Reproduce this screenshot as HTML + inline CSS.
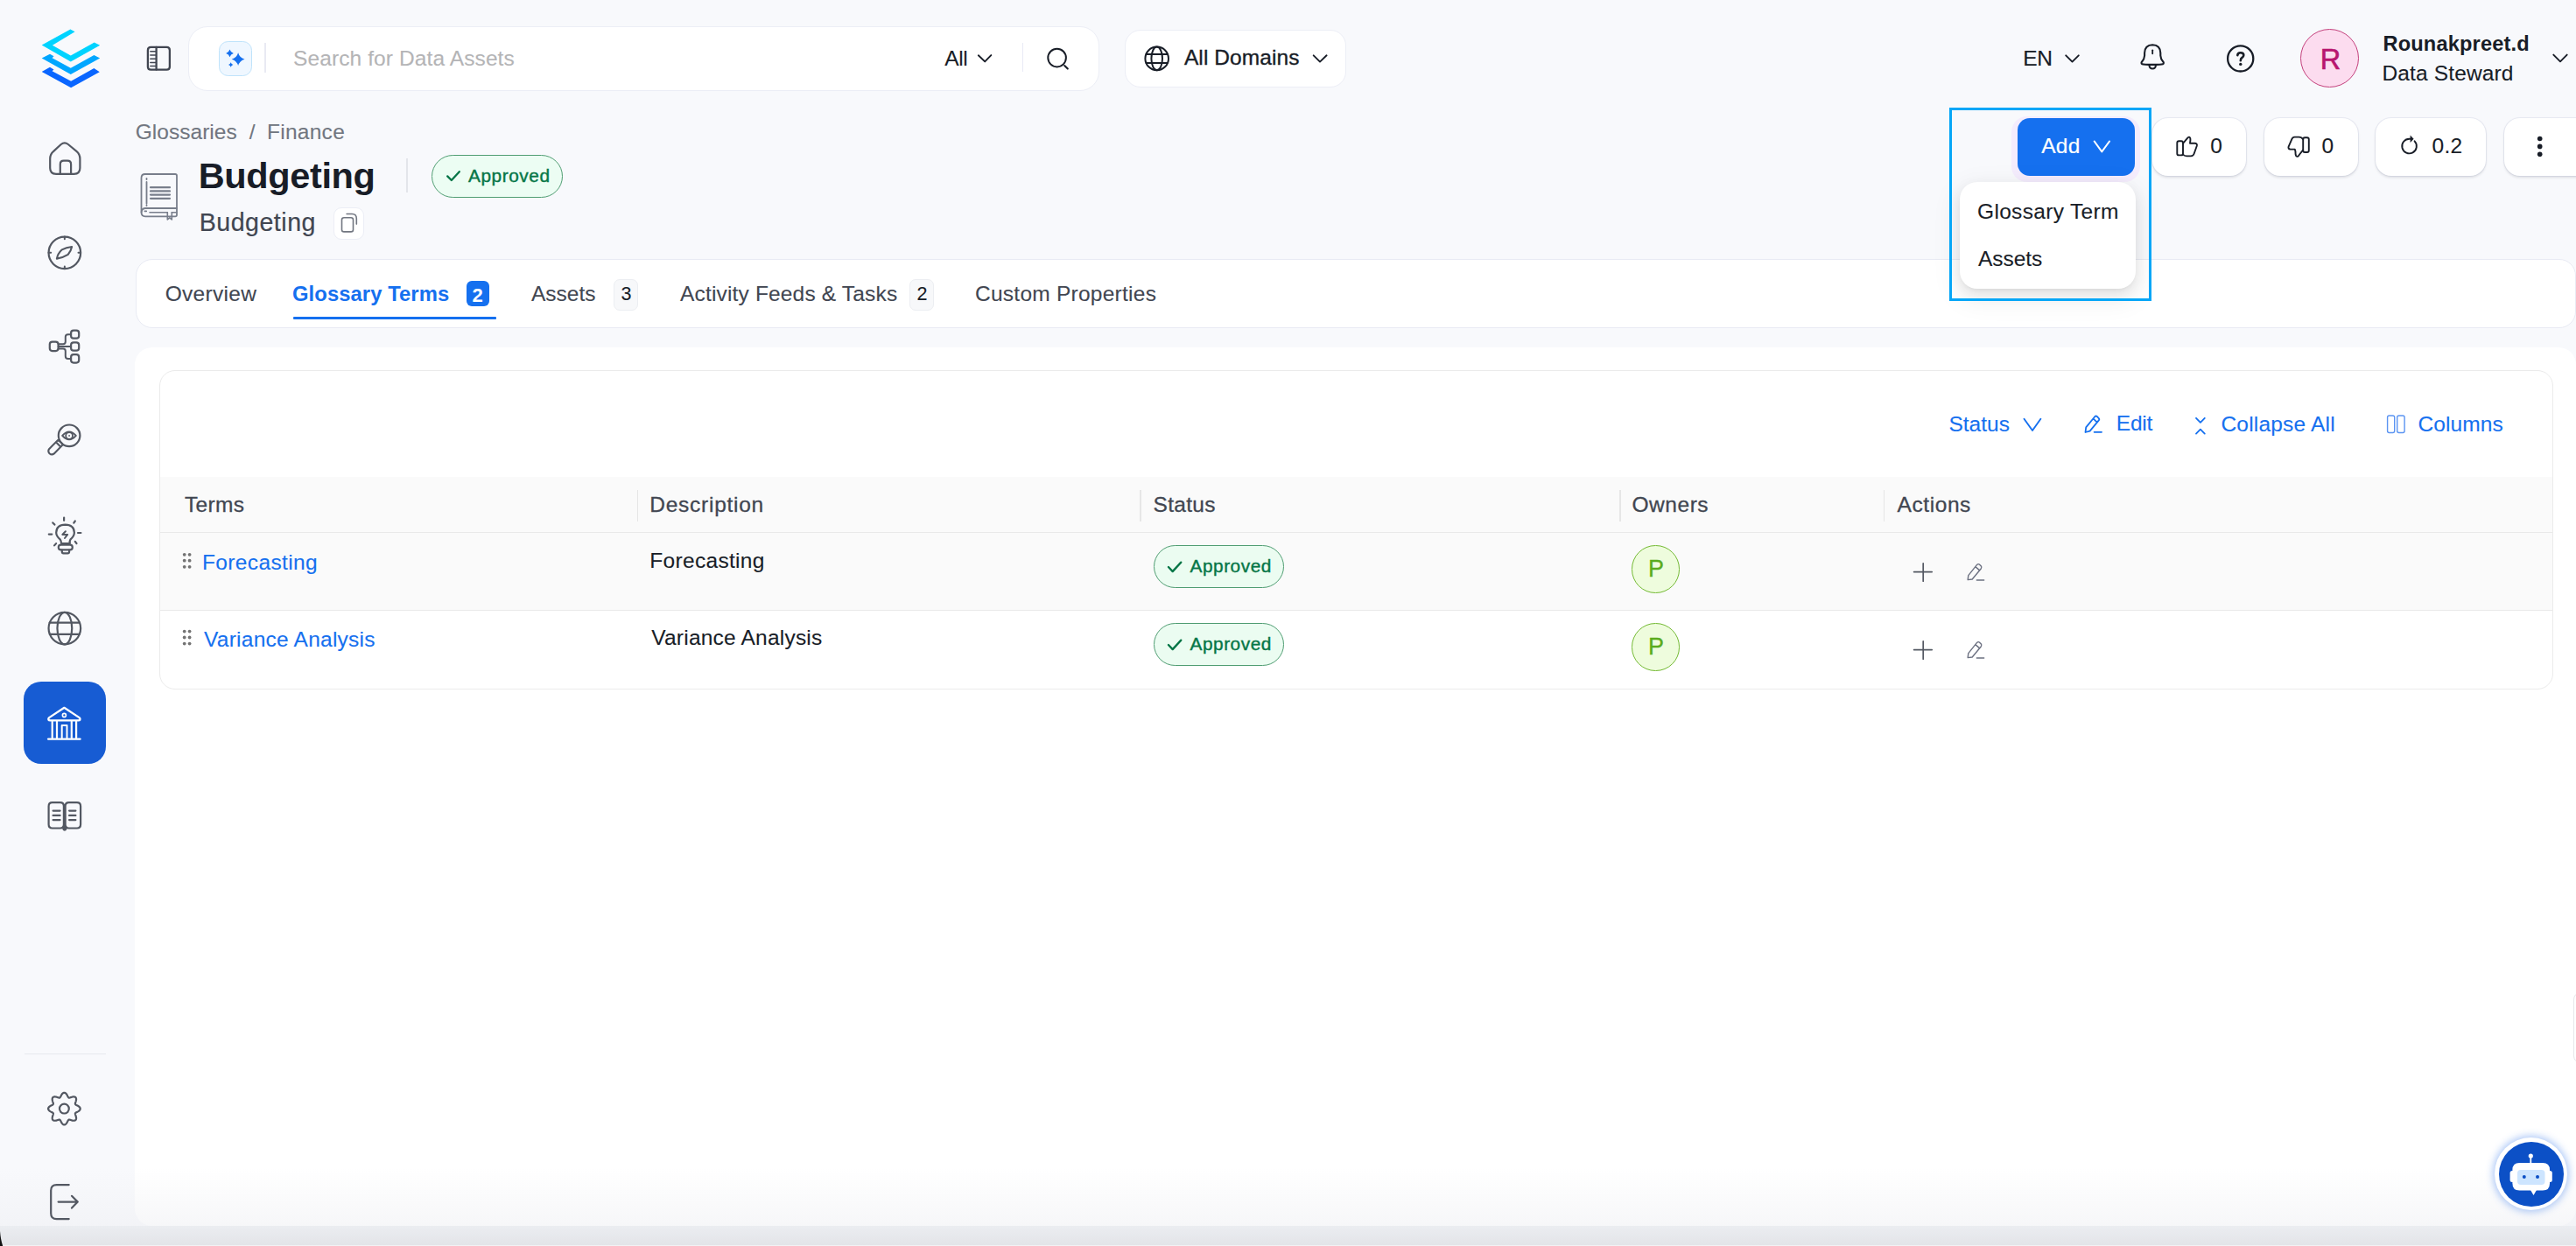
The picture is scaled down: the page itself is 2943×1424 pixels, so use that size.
<!DOCTYPE html>
<html><head><meta charset="utf-8"><title>Budgeting - Glossary</title>
<style>
*{box-sizing:border-box}
html,body{margin:0;padding:0}
body{width:2943px;height:1424px;overflow:hidden;position:relative;background:#f8f9fc;font-family:"Liberation Sans",sans-serif;color:#181d27}
.a{position:absolute}
.t{position:absolute;white-space:nowrap;line-height:1}
</style></head><body>
<div class="a" style="left:215px;top:30px;width:1041px;height:73.5px;border-radius:22px;background:#fff;border:1.5px solid #eceef6"></div>
<div class="a" style="left:250px;top:47px;width:38px;height:39.6px;border-radius:10.5px;background:#eff7ff;border:1.5px solid #bfe3fb"></div>
<div class="a" style="left:302px;top:49px;width:1.5px;height:34px;background:#e9eaf3"></div>
<div class="t" style="left:335.00px;top:54.6px;font-size:24.5px;color:#b4b4b6;letter-spacing:0.105px;-webkit-text-stroke:0.1px #b4b4b6;">Search for Data Assets</div>
<div class="t" style="left:1079.30px;top:55.1px;font-size:24.5px;color:#181d27;letter-spacing:-0.4px;-webkit-text-stroke:0.1px #181d27;">All</div>
<div class="a" style="left:1167.5px;top:49.3px;width:1.5px;height:33px;background:#e8eaf5"></div>
<div class="a" style="left:1285px;top:34px;width:253px;height:66px;border-radius:18px;background:#fff;border:1.5px solid #eceef6"></div>
<div class="t" style="left:1352.90px;top:54.2px;font-size:24.5px;color:#181d27;letter-spacing:0.1px;-webkit-text-stroke:0.35px #181d27;">All Domains</div>
<div class="t" style="left:2311.20px;top:54.8px;font-size:24.5px;color:#181d27;letter-spacing:-0.4px;-webkit-text-stroke:0.2px #181d27;">EN</div>
<div class="a" style="left:2628px;top:33px;width:67px;height:67px;border-radius:50%;background:#fcdcef;border:1.5px solid #c4407c"></div>
<div class="t" style="left:2650.70px;top:52.2px;font-size:32.5px;color:#b8166f;letter-spacing:0.0px;-webkit-text-stroke:0.6px #b8166f;">R</div>
<div class="t" style="left:2722.50px;top:38.5px;font-size:23.6px;color:#181d27;letter-spacing:0.158px;font-weight:700;">Rounakpreet.d</div>
<div class="t" style="left:2721.50px;top:71.5px;font-size:24.5px;color:#181d27;letter-spacing:0.136px;-webkit-text-stroke:0.1px #181d27;">Data Steward</div>
<div class="t" style="left:154.70px;top:138.7px;font-size:24.5px;color:#717680;letter-spacing:0.033px;-webkit-text-stroke:0.1px #717680;">Glossaries</div>
<div class="t" style="left:284.70px;top:138.7px;font-size:24.5px;color:#717680;letter-spacing:0.0px;-webkit-text-stroke:0.1px #717680;">/</div>
<div class="t" style="left:305.00px;top:138.7px;font-size:24.5px;color:#717680;letter-spacing:0.267px;-webkit-text-stroke:0.1px #717680;">Finance</div>
<div class="t" style="left:226.70px;top:179.7px;font-size:41.5px;color:#181d27;letter-spacing:-0.362px;font-weight:700;">Budgeting</div>
<div class="a" style="left:464.3px;top:181px;width:1.5px;height:39px;background:#e3e5ea"></div>
<div class="a" style="left:493px;top:177px;width:150px;height:48.6px;border-radius:25px;background:#ecfdf3;border:1.5px solid #4f9d72"></div>
<div class="t" style="left:535.00px;top:191.4px;font-size:20.8px;color:#067647;letter-spacing:0.571px;-webkit-text-stroke:0.4px #067647;">Approved</div>
<div class="t" style="left:227.70px;top:240.2px;font-size:28.6px;color:#414651;letter-spacing:0.5px;-webkit-text-stroke:0.2px #414651;">Budgeting</div>
<div class="a" style="left:380.6px;top:237.2px;width:35.4px;height:36.4px;border-radius:9px;background:#fff;border:1.2px solid #eceef6"></div>
<div class="a" style="left:2298px;top:133px;width:147px;height:75px;border-radius:18px;background:#f4ecfd"></div>
<div class="a" style="left:2305px;top:134.5px;width:134px;height:66.5px;border-radius:14px;background:#1570ef"></div>
<div class="t" style="left:2332.20px;top:154.7px;font-size:24.5px;color:#fff;letter-spacing:0.25px;-webkit-text-stroke:0.2px #fff;">Add</div>
<div class="a" style="left:2459px;top:135px;width:107px;height:66px;border-radius:18px;background:#fff;box-shadow:0 1.5px 3px rgba(16,24,40,.12),0 0 0 1px rgba(233,235,244,.9)"></div>
<div class="a" style="left:2587px;top:135px;width:107px;height:66px;border-radius:18px;background:#fff;box-shadow:0 1.5px 3px rgba(16,24,40,.12),0 0 0 1px rgba(233,235,244,.9)"></div>
<div class="a" style="left:2714px;top:135px;width:126px;height:66px;border-radius:18px;background:#fff;box-shadow:0 1.5px 3px rgba(16,24,40,.12),0 0 0 1px rgba(233,235,244,.9)"></div>
<div class="a" style="left:2861px;top:135px;width:110px;height:66px;border-radius:18px;background:#fff;box-shadow:0 1.5px 3px rgba(16,24,40,.12),0 0 0 1px rgba(233,235,244,.9)"></div>
<div class="t" style="left:2525.20px;top:154.5px;font-size:24.5px;color:#181d27;letter-spacing:0.0px;-webkit-text-stroke:0.1px #181d27;">0</div>
<div class="t" style="left:2652.50px;top:154.5px;font-size:24.5px;color:#181d27;letter-spacing:0.0px;-webkit-text-stroke:0.1px #181d27;">0</div>
<div class="t" style="left:2778.60px;top:154.8px;font-size:24.5px;color:#181d27;letter-spacing:0.25px;-webkit-text-stroke:0.1px #181d27;">0.2</div>
<div class="a" style="left:155px;top:296px;width:2788px;height:79px;border-radius:19px;background:#fff;border:1.5px solid #e9ebf4"></div>
<div class="t" style="left:188.70px;top:323.7px;font-size:24.5px;color:#414651;letter-spacing:0.3px;-webkit-text-stroke:0.1px #414651;">Overview</div>
<div class="t" style="left:334.00px;top:324.3px;font-size:23.8px;color:#1570ef;letter-spacing:0.077px;font-weight:700;">Glossary Terms</div>
<div class="a" style="left:533px;top:321px;width:26px;height:28.6px;border-radius:6px;background:#1570ef"></div>
<div class="t" style="left:539.50px;top:326.5px;font-size:22px;color:#fff;letter-spacing:0.0px;font-weight:700;">2</div>
<div class="a" style="left:334.5px;top:362px;width:232px;height:3.4px;background:#1570ef;border-radius:1px"></div>
<div class="t" style="left:607.00px;top:323.7px;font-size:24.5px;color:#414651;letter-spacing:0.0px;-webkit-text-stroke:0.1px #414651;">Assets</div>
<div class="a" style="left:701px;top:319px;width:28px;height:35.5px;border-radius:7px;background:#f7f8fa;border:1.2px solid #eceef2"></div>
<div class="t" style="left:709.40px;top:326.1px;font-size:21.5px;color:#181d27;letter-spacing:0.0px;-webkit-text-stroke:0.1px #181d27;">3</div>
<div class="t" style="left:777.00px;top:323.7px;font-size:24.5px;color:#414651;letter-spacing:0.167px;-webkit-text-stroke:0.1px #414651;">Activity Feeds &amp; Tasks</div>
<div class="a" style="left:1039px;top:319px;width:28px;height:35.5px;border-radius:7px;background:#f7f8fa;border:1.2px solid #eceef2"></div>
<div class="t" style="left:1047.60px;top:326.1px;font-size:21.5px;color:#181d27;letter-spacing:0.0px;-webkit-text-stroke:0.1px #181d27;">2</div>
<div class="t" style="left:1114.00px;top:323.7px;font-size:24.5px;color:#414651;letter-spacing:0.25px;-webkit-text-stroke:0.1px #414651;">Custom Properties</div>
<div class="a" style="left:154px;top:396.7px;width:2789px;height:1004px;border-radius:20px;background:#fff"></div>
<div class="a" style="left:182px;top:423px;width:2734.5px;height:364.5px;border-radius:18px;background:#fff;border:1.5px solid #ebebeb;overflow:hidden"><div class="a" style="left:0;top:120.5px;width:100%;height:64.5px;background:#fafafa;border-bottom:1.3px solid #e9e9e9"></div><div class="a" style="left:0;top:185px;width:100%;height:89px;background:#fafafa;border-bottom:1.3px solid #e9e9e9"></div></div>
<div class="t" style="left:2226.40px;top:473.1px;font-size:24.5px;color:#1570ef;letter-spacing:0.02px;-webkit-text-stroke:0.1px #1570ef;">Status</div>
<div class="t" style="left:2417.80px;top:472.3px;font-size:24.5px;color:#1570ef;letter-spacing:-0.233px;-webkit-text-stroke:0.1px #1570ef;">Edit</div>
<div class="t" style="left:2537.40px;top:473.1px;font-size:24.5px;color:#1570ef;letter-spacing:0.209px;-webkit-text-stroke:0.1px #1570ef;">Collapse All</div>
<div class="t" style="left:2762.50px;top:473.1px;font-size:24.5px;color:#1570ef;letter-spacing:0.083px;-webkit-text-stroke:0.1px #1570ef;">Columns</div>
<div class="t" style="left:211.00px;top:565.2px;font-size:24.5px;color:#414651;letter-spacing:0.35px;-webkit-text-stroke:0.3px #414651;">Terms</div>
<div class="t" style="left:742.30px;top:565.2px;font-size:24.5px;color:#414651;letter-spacing:0.74px;-webkit-text-stroke:0.3px #414651;">Description</div>
<div class="t" style="left:1317.60px;top:565.2px;font-size:24.5px;color:#414651;letter-spacing:0.3px;-webkit-text-stroke:0.3px #414651;">Status</div>
<div class="t" style="left:1864.50px;top:565.2px;font-size:24.5px;color:#414651;letter-spacing:0.54px;-webkit-text-stroke:0.3px #414651;">Owners</div>
<div class="t" style="left:2167.50px;top:565.2px;font-size:24.5px;color:#414651;letter-spacing:0.583px;-webkit-text-stroke:0.3px #414651;">Actions</div>
<div class="a" style="left:727.5px;top:559.5px;width:1.5px;height:36px;background:#e6e6e6"></div>
<div class="a" style="left:1302px;top:559.5px;width:1.5px;height:36px;background:#e6e6e6"></div>
<div class="a" style="left:1850px;top:559.5px;width:1.5px;height:36px;background:#e6e6e6"></div>
<div class="a" style="left:2151.5px;top:559.5px;width:1.5px;height:36px;background:#e6e6e6"></div>
<div class="t" style="left:231.00px;top:630.7px;font-size:24.5px;color:#1570ef;letter-spacing:0.36px;-webkit-text-stroke:0.1px #1570ef;">Forecasting</div>
<div class="t" style="left:742.30px;top:628.9px;font-size:24.5px;color:#181d27;letter-spacing:0.31px;-webkit-text-stroke:0.1px #181d27;">Forecasting</div>
<div class="a" style="left:1317.6px;top:623.4px;width:149px;height:48.8px;border-radius:25px;background:#ebfcf1;border:1.5px solid #4f9d72"></div>
<div class="t" style="left:1359.50px;top:637.0px;font-size:20.8px;color:#067647;letter-spacing:0.543px;-webkit-text-stroke:0.4px #067647;">Approved</div>
<div class="a" style="left:1864.3px;top:623.4px;width:54.5px;height:54.5px;border-radius:50%;background:#eefcdd;border:1.5px solid #74ba34"></div>
<div class="t" style="left:1883.00px;top:636.7px;font-size:27px;color:#5aab1e;letter-spacing:0.0px;-webkit-text-stroke:0.3px #5aab1e;">P</div>
<div class="t" style="left:233.00px;top:718.5px;font-size:24.5px;color:#1570ef;letter-spacing:0.25px;-webkit-text-stroke:0.1px #1570ef;">Variance Analysis</div>
<div class="t" style="left:744.30px;top:716.7px;font-size:24.5px;color:#181d27;letter-spacing:0.213px;-webkit-text-stroke:0.1px #181d27;">Variance Analysis</div>
<div class="a" style="left:1317.6px;top:712.4px;width:149px;height:48.8px;border-radius:25px;background:#ebfcf1;border:1.5px solid #4f9d72"></div>
<div class="t" style="left:1359.50px;top:726.0px;font-size:20.8px;color:#067647;letter-spacing:0.543px;-webkit-text-stroke:0.4px #067647;">Approved</div>
<div class="a" style="left:1864.3px;top:712.4px;width:54.5px;height:54.5px;border-radius:50%;background:#eefcdd;border:1.5px solid #74ba34"></div>
<div class="t" style="left:1883.00px;top:725.7px;font-size:27px;color:#5aab1e;letter-spacing:0.0px;-webkit-text-stroke:0.3px #5aab1e;">P</div>
<div class="a" style="left:2239px;top:208px;width:201px;height:122px;border-radius:20px;background:#fff;box-shadow:0 6px 16px 0 rgba(0,0,0,.08),0 3px 6px -4px rgba(0,0,0,.12),0 9px 28px 8px rgba(0,0,0,.05)"></div>
<div class="t" style="left:2259.00px;top:230.1px;font-size:24.5px;color:#181d27;letter-spacing:0.333px;-webkit-text-stroke:0.1px #181d27;">Glossary Term</div>
<div class="t" style="left:2260.00px;top:283.9px;font-size:24.5px;color:#181d27;letter-spacing:-0.06px;-webkit-text-stroke:0.1px #181d27;">Assets</div>
<div class="a" style="left:2227px;top:123px;width:231px;height:221px;border:3.5px solid #05a6f7"></div>
<div class="a" style="left:27px;top:778.8px;width:94px;height:94.5px;border-radius:20px;background:#175cd3"></div>
<div class="a" style="left:27.5px;top:1203.6px;width:93px;height:1.4px;background:#e7e9ee"></div>
<div class="a" style="left:0;top:1335px;width:2943px;height:66px;background:linear-gradient(rgba(236,237,241,0),rgba(236,237,241,.45))"></div>
<div class="a" style="left:0;top:1400.7px;width:2943px;height:22px;background:linear-gradient(#ebedf1,#e3e4e8)"></div>
<div class="a" style="left:0;top:1422.6px;width:2943px;height:1.4px;background:#f2f3f5"></div>
<div class="a" style="left:2940px;top:1133.5px;width:20px;height:81px;border-radius:8px;background:#fff;border:1.5px solid #e6e7ea"></div>
<div class="a" style="left:2850px;top:1300px;width:83px;height:83px;border-radius:50%;background:#fff;box-shadow:0 0 9px 2px rgba(40,110,235,.38)"></div>
<div class="a" style="left:2854.5px;top:1304.5px;width:74px;height:74px;border-radius:50%;background:#0c50c6"></div>
<svg class="a" style="left:0;top:0;overflow:visible" width="2943" height="1424" viewBox="0 0 2943 1424">
<path d="M80.4 33.5 L85.6 36.3 L59.9 51.8 L80.8 63.6 L107.7 48.4 L114.2 51.8 L80.8 70.4 L47.7 51.4 Z" fill="#00d3ff"/>
<path d="M47.7 66.5 L57.0 61.7 L61.5 64.3 L59.6 66.3 L80.8 77.8 L107.4 63.0 L114.2 66.5 L80.8 85.1 Z" fill="#00a6ff"/>
<path d="M47.7 81.9 L57.0 76.8 L61.5 79.4 L59.6 81.3 L81.1 92.8 L107.4 78.1 L113.8 82.3 L81.1 100.2 Z" fill="#0a66ff"/>
<path d="M172.4 53.9 H190.4 Q193.9 53.9 193.9 57.4 V76.2 Q193.9 79.7 190.4 79.7 H172.4 Q168.9 79.7 168.9 76.2 V57.4 Q168.9 53.9 172.4 53.9 Z" fill="none" stroke="#414651" stroke-width="2.3" stroke-linecap="round" stroke-linejoin="round" />
<path d="M178.6 54 V79.6" fill="none" stroke="#414651" stroke-width="2.3" stroke-linecap="round" stroke-linejoin="round" />
<path d="M171.8 58.75 H177.6" fill="none" stroke="#414651" stroke-width="1.5" stroke-linecap="round" stroke-linejoin="round" />
<path d="M171.8 63.1 H177.6" fill="none" stroke="#414651" stroke-width="1.5" stroke-linecap="round" stroke-linejoin="round" />
<path d="M171.8 67.2 H177.6" fill="none" stroke="#414651" stroke-width="1.5" stroke-linecap="round" stroke-linejoin="round" />
<path d="M171.8 71.4 H177.6" fill="none" stroke="#414651" stroke-width="1.5" stroke-linecap="round" stroke-linejoin="round" />
<path d="M171.8 75.6 H177.6" fill="none" stroke="#414651" stroke-width="1.5" stroke-linecap="round" stroke-linejoin="round" />
<path d="M272.1 60.300000000000004 Q273.728 66.072 279.5 67.7 Q273.728 69.328 272.1 75.10000000000001 Q270.47200000000004 69.328 264.70000000000005 67.7 Q270.47200000000004 66.072 272.1 60.300000000000004 Z" fill="#1570ef"/>
<path d="M262.5 56.6 Q263.446 59.954 266.8 60.9 Q263.446 61.846 262.5 65.2 Q261.554 61.846 258.2 60.9 Q261.554 59.954 262.5 56.6 Z" fill="#1570ef"/>
<path d="M263.7 71.3 Q264.294 73.406 266.4 74.0 Q264.294 74.594 263.7 76.7 Q263.106 74.594 261.0 74.0 Q263.106 73.406 263.7 71.3 Z" fill="#1570ef"/>
<path d="M1117.8 63.3 L1125.2 70.4 L1132.3 63.1" fill="none" stroke="#181d27" stroke-width="1.9" stroke-linecap="round" stroke-linejoin="round" />
<circle cx="1207.6" cy="66.1" r="10.3" fill="none" stroke="#181d27" stroke-width="2.0"/>
<path d="M1216.2 75.0 L1219.8 78.6" fill="none" stroke="#181d27" stroke-width="2.1" stroke-linecap="round" stroke-linejoin="round" />
<circle cx="1321.7" cy="66.9" r="13.3" fill="none" stroke="#181d27" stroke-width="2.0"/>
<ellipse cx="1321.7" cy="66.9" rx="6.3" ry="13.3" fill="none" stroke="#181d27" stroke-width="2"/>
<path d="M1309.5 61.9 H1333.9 M1309.5 71.9 H1333.9" fill="none" stroke="#181d27" stroke-width="2.0" stroke-linecap="round" stroke-linejoin="round" />
<path d="M1500.7 63.3 L1508 70.6 L1515.6 63.3" fill="none" stroke="#181d27" stroke-width="1.9" stroke-linecap="round" stroke-linejoin="round" />
<path d="M2360.2 63.3 L2367.5 70.6 L2374.8 63.3" fill="none" stroke="#181d27" stroke-width="1.9" stroke-linecap="round" stroke-linejoin="round" />
<path d="M2459.2 51.2 Q2450.3 51.4 2450.1 60.5 V63.5 Q2449.8 67.5 2447.3 70.2 Q2445.6 72.3 2447.4 73.3 Q2449 73.9 2459.2 73.9 Q2469.4 73.9 2471 73.3 Q2472.8 72.3 2471.1 70.2 Q2468.6 67.5 2468.3 63.5 V60.5 Q2468.1 51.4 2459.2 51.2 Z" fill="none" stroke="#181d27" stroke-width="2.1" stroke-linecap="round" stroke-linejoin="round" />
<path d="M2455.3 74.2 Q2455.8 78.6 2459.2 78.6 Q2462.6 78.6 2463.1 74.2" fill="none" stroke="#181d27" stroke-width="2.0" stroke-linecap="round" stroke-linejoin="round" />
<path d="M2459.2 57.3 V61.3" fill="none" stroke="#181d27" stroke-width="1.8" stroke-linecap="round" stroke-linejoin="round" />
<circle cx="2559.7" cy="66.9" r="14.6" fill="none" stroke="#181d27" stroke-width="2.3"/>
<path d="M2556.3 63.2 Q2556.5 60.3 2559.8 60.3 Q2563.3 60.3 2563.3 63.1 Q2563.3 65.1 2561.4 66.0 Q2559.8 66.8 2559.8 69.3" fill="none" stroke="#181d27" stroke-width="2.6" stroke-linecap="round" stroke-linejoin="round" />
<circle cx="2559.8" cy="73.4" r="1.7" fill="#181d27" stroke="#181d27" stroke-width="0"/>
<path d="M2917.3 62.6 L2925 70.3 L2932.7 62.6" fill="none" stroke="#181d27" stroke-width="1.9" stroke-linecap="round" stroke-linejoin="round" />
<path d="M165.8 199 H200.2 Q202 199 202 200.8 V245.5 Q202 247.3 200.2 247.3 H166 Q161.5 247.3 161.5 242.8 V203.3 Q161.5 199 165.8 199 Z" fill="none" stroke="#787e8b" stroke-width="1.8" stroke-linecap="round" stroke-linejoin="round" />
<path d="M161.6 242.5 Q161.9 238 166.5 238 H202" fill="none" stroke="#787e8b" stroke-width="1.8" stroke-linecap="round" stroke-linejoin="round" />
<path d="M171 242.8 H191.3 M196.3 242.8 H201.8 M165.3 241.4 H167.3" fill="none" stroke="#787e8b" stroke-width="1.6" stroke-linecap="round" stroke-linejoin="round" />
<path d="M191.3 242.8 V251 L193.8 248.8 L196.3 251 V242.8" fill="none" stroke="#787e8b" stroke-width="1.6" stroke-linecap="round" stroke-linejoin="round" />
<path d="M167.5 204 V205 M167.5 208 V232.5 M167.5 234.3 V235" fill="none" stroke="#787e8b" stroke-width="1.8" stroke-linecap="round" stroke-linejoin="round" />
<path d="M172 214.2 H194" fill="none" stroke="#787e8b" stroke-width="2.2" stroke-linecap="round" stroke-linejoin="round" />
<path d="M172 218.4 H194" fill="none" stroke="#787e8b" stroke-width="2.2" stroke-linecap="round" stroke-linejoin="round" />
<path d="M172 222.6 H194" fill="none" stroke="#787e8b" stroke-width="2.2" stroke-linecap="round" stroke-linejoin="round" />
<path d="M172 226.8 H194" fill="none" stroke="#787e8b" stroke-width="2.2" stroke-linecap="round" stroke-linejoin="round" />
<path d="M511.2 201.4 L515.8 206.0 L524.8 196.2" fill="none" stroke="#067647" stroke-width="2.3" stroke-linecap="round" stroke-linejoin="round" />
<path d="M393 248.7 H401 Q403.5 248.7 403.5 251.2 V262.4 Q403.5 264.9 401 264.9 H393 Q390.5 264.9 390.5 262.4 V251.2 Q390.5 248.7 393 248.7 Z" fill="none" stroke="#717680" stroke-width="1.6" stroke-linecap="round" stroke-linejoin="round" />
<path d="M396.1 244.5 H402.1 Q407.3 244.5 407.3 249.7 V256.1" fill="none" stroke="#717680" stroke-width="1.6" stroke-linecap="round" stroke-linejoin="round" />
<path d="M2392.6 161.4 L2401.3 173.4 L2410.1 161.4" fill="none" stroke="#fff" stroke-width="1.9" stroke-linecap="round" stroke-linejoin="round" />
<path d="M2489.3 161.2 H2492 Q2494 161.2 2494 163.2 V175.4 Q2494 177.4 2492 177.4 H2489.3 Q2487.3 177.4 2487.3 175.4 V163.2 Q2487.3 161.2 2489.3 161.2 Z" fill="none" stroke="#181d27" stroke-width="1.9" stroke-linecap="round" stroke-linejoin="round" />
<path d="M2494 163.8 L2499.5 157.4 Q2501.5 155.6 2502.3 158 Q2502.8 160 2502 163.8 H2508 Q2510.5 164 2509.8 166.8 L2506.6 175.8 Q2505.8 178.2 2503 178.4 H2498.2 Q2495.5 178.3 2494 176.5" fill="none" stroke="#181d27" stroke-width="1.9" stroke-linecap="round" stroke-linejoin="round" />
<path d="M2633.2 157.2 H2635.8 Q2637.8 157.2 2637.8 159.2 V172 Q2637.8 174 2635.8 174 H2633.2 Q2631.2 174 2631.2 172 V159.2 Q2631.2 157.2 2633.2 157.2 Z" fill="none" stroke="#181d27" stroke-width="1.9" stroke-linecap="round" stroke-linejoin="round" />
<path d="M2631.2 159.2 Q2629.5 156.6 2626.5 156.6 H2621.5 Q2619 156.8 2618.3 159.2 L2614.6 167.6 Q2613.8 170.2 2616.6 170.6 H2621.8 Q2622.8 172.8 2622.6 176.4 Q2623 179.3 2625 178.8 Q2626 178.4 2627.5 176 L2631.2 171.4" fill="none" stroke="#181d27" stroke-width="1.9" stroke-linecap="round" stroke-linejoin="round" />
<path d="M2758.6 161.3 A8.3 8.3 0 1 1 2752.8 158.7 H2755" fill="none" stroke="#181d27" stroke-width="1.9" stroke-linecap="round" stroke-linejoin="round" />
<path d="M2753.6 154.6 L2757.6 158.8 L2753.6 163 Z" fill="#181d27"/>
<circle cx="2901.7" cy="158.5" r="2.8" fill="#181d27" stroke="#181d27" stroke-width="0"/>
<circle cx="2901.7" cy="167.4" r="2.8" fill="#181d27" stroke="#181d27" stroke-width="0"/>
<circle cx="2901.7" cy="176.3" r="2.8" fill="#181d27" stroke="#181d27" stroke-width="0"/>
<path d="M2312.5 478.8 L2322 492 L2331.4 478.8" fill="none" stroke="#1570ef" stroke-width="1.9" stroke-linecap="round" stroke-linejoin="round" />
<path d="M2382.5 494 L2383.2 488.4 L2393.2 476.2 Q2394.6 474.8 2396 476.2 L2397.6 477.8 Q2399 479.2 2397.6 480.6 L2387.6 492.6 Z M2391.4 478.3 L2395.6 482.3" fill="none" stroke="#1570ef" stroke-width="1.8" stroke-linecap="round" stroke-linejoin="round" />
<path d="M2392.6 493.8 H2401" fill="none" stroke="#1570ef" stroke-width="1.8" stroke-linecap="round" stroke-linejoin="round" />
<path d="M2509 477.8 L2513.9 482.8 L2518.8 477.8 M2509 495.6 L2513.9 490.7 L2518.8 495.6" fill="none" stroke="#1570ef" stroke-width="1.8" stroke-linecap="round" stroke-linejoin="round" />
<path d="M2729.6 475 H2733.7 Q2735.7 475 2735.7 477 V492.5 Q2735.7 494.5 2733.7 494.5 H2729.6 Q2727.6 494.5 2727.6 492.5 V477 Q2727.6 475 2729.6 475 Z M2740.7 475 H2745.1 Q2747.1 475 2747.1 477 V492.5 Q2747.1 494.5 2745.1 494.5 H2740.7 Q2738.7 494.5 2738.7 492.5 V477 Q2738.7 475 2740.7 475 Z" fill="none" stroke="#5b94f2" stroke-width="1.4" stroke-linecap="round" stroke-linejoin="round" />
<circle cx="210.7" cy="633.8" r="1.9" fill="#737373" stroke="#717171" stroke-width="0"/>
<circle cx="210.7" cy="640.7" r="1.9" fill="#737373" stroke="#717171" stroke-width="0"/>
<circle cx="210.7" cy="647.8" r="1.9" fill="#737373" stroke="#717171" stroke-width="0"/>
<circle cx="216.6" cy="633.8" r="1.9" fill="#737373" stroke="#717171" stroke-width="0"/>
<circle cx="216.6" cy="640.7" r="1.9" fill="#737373" stroke="#717171" stroke-width="0"/>
<circle cx="216.6" cy="647.8" r="1.9" fill="#737373" stroke="#717171" stroke-width="0"/>
<path d="M1334.9 648.0 L1339.7 653.1 L1349.3 642.6" fill="none" stroke="#067647" stroke-width="2.3" stroke-linecap="round" stroke-linejoin="round" />
<path d="M2197.2 643.9 V664.2 M2186.6 653.6 H2207.2" fill="none" stroke="#535862" stroke-width="1.7" stroke-linecap="round" stroke-linejoin="round" />
<path d="M2248.2 662.6 L2248.8 657.6 L2258.6 645.4 Q2260.2 643.8 2261.8 645.4 L2263.2 646.8 Q2264.6 648.4 2263.2 650.0 L2253.2 662.0 Z M2256.8 647.6 L2261.4 651.6" fill="none" stroke="#6b7080" stroke-width="1.4" stroke-linecap="round" stroke-linejoin="round" />
<path d="M2258.4 662.9 H2266.6" fill="none" stroke="#6b7080" stroke-width="1.5" stroke-linecap="round" stroke-linejoin="round" />
<circle cx="210.7" cy="721.6" r="1.9" fill="#737373" stroke="#717171" stroke-width="0"/>
<circle cx="210.7" cy="728.5000000000001" r="1.9" fill="#737373" stroke="#717171" stroke-width="0"/>
<circle cx="210.7" cy="735.6" r="1.9" fill="#737373" stroke="#717171" stroke-width="0"/>
<circle cx="216.6" cy="721.6" r="1.9" fill="#737373" stroke="#717171" stroke-width="0"/>
<circle cx="216.6" cy="728.5000000000001" r="1.9" fill="#737373" stroke="#717171" stroke-width="0"/>
<circle cx="216.6" cy="735.6" r="1.9" fill="#737373" stroke="#717171" stroke-width="0"/>
<path d="M1334.9 737.0 L1339.7 742.1 L1349.3 731.6" fill="none" stroke="#067647" stroke-width="2.3" stroke-linecap="round" stroke-linejoin="round" />
<path d="M2197.2 732.9 V753.2 M2186.6 742.6 H2207.2" fill="none" stroke="#535862" stroke-width="1.7" stroke-linecap="round" stroke-linejoin="round" />
<path d="M2248.2 751.6 L2248.8 746.6 L2258.6 734.4 Q2260.2 732.8 2261.8 734.4 L2263.2 735.8 Q2264.6 737.4 2263.2 739.0 L2253.2 751.0 Z M2256.8 736.6 L2261.4 740.6" fill="none" stroke="#6b7080" stroke-width="1.4" stroke-linecap="round" stroke-linejoin="round" />
<path d="M2258.4 751.9 H2266.6" fill="none" stroke="#6b7080" stroke-width="1.5" stroke-linecap="round" stroke-linejoin="round" />
<path d="M64 198.9 H84.6 Q91.4 198.9 91.4 192.1 V181.5 Q91.4 176.2 87.4 172.9 L77.9 165 Q73.8 161.6 69.7 165 L61.2 172.9 Q57.2 176.2 57.2 181.5 V192.1 Q57.2 198.9 64 198.9 Z" fill="none" stroke="#535862" stroke-width="2.2" stroke-linecap="round" stroke-linejoin="round" />
<path d="M68.8 198.9 V187.7 Q68.8 183.7 72.8 183.7 H77.1 Q81.1 183.7 81.1 187.7 V198.9" fill="none" stroke="#535862" stroke-width="2.2" stroke-linecap="round" stroke-linejoin="round" />
<circle cx="73.85" cy="288.85" r="18.3" fill="none" stroke="#535862" stroke-width="2.2"/>
<path d="M73.85 270.6 V273.2 M73.85 304.5 V307.1 M55.6 288.85 H58.2 M89.5 288.85 H92.1" fill="none" stroke="#535862" stroke-width="2.0" stroke-linecap="round" stroke-linejoin="round" />
<path d="M82.1 282.0 Q80.9 287.4 77.8 290.8 Q72.4 294.2 64.9 295.6 Q66.0 289.8 70.8 285.3 Q75.6 282.7 82.1 282.0 Z" fill="none" stroke="#535862" stroke-width="2.1" stroke-linecap="round" stroke-linejoin="round" />
<path d="M59.8 390.6 H63.599999999999994 Q66.6 390.6 66.6 393.6 V398.1 Q66.6 401.1 63.599999999999994 401.1 H59.8 Q56.8 401.1 56.8 398.1 V393.6 Q56.8 390.6 59.8 390.6 Z" fill="none" stroke="#535862" stroke-width="2.2" stroke-linecap="round" stroke-linejoin="round" />
<path d="M84.1 377.6 H87.2 Q90.2 377.6 90.2 380.6 V383.7 Q90.2 386.7 87.2 386.7 H84.1 Q81.1 386.7 81.1 383.7 V380.6 Q81.1 377.6 84.1 377.6 Z" fill="none" stroke="#535862" stroke-width="2.2" stroke-linecap="round" stroke-linejoin="round" />
<path d="M84.1 391.3 H87.2 Q90.2 391.3 90.2 394.3 V397.7 Q90.2 400.7 87.2 400.7 H84.1 Q81.1 400.7 81.1 397.7 V394.3 Q81.1 391.3 84.1 391.3 Z" fill="none" stroke="#535862" stroke-width="2.2" stroke-linecap="round" stroke-linejoin="round" />
<path d="M84.1 405.2 H87.2 Q90.2 405.2 90.2 408.2 V411.6 Q90.2 414.6 87.2 414.6 H84.1 Q81.1 414.6 81.1 411.6 V408.2 Q81.1 405.2 84.1 405.2 Z" fill="none" stroke="#535862" stroke-width="2.2" stroke-linecap="round" stroke-linejoin="round" />
<path d="M66.6 393.2 H72.2 Q74.8 393.2 74.8 390.6 V385 Q74.8 382.2 77.6 382.2 H81.1 M66.6 395.9 H81.1 M66.6 398.6 H72.2 Q74.8 398.6 74.8 401.2 V407 Q74.8 409.9 77.6 409.9 H81.1" fill="none" stroke="#535862" stroke-width="2.0" stroke-linecap="round" stroke-linejoin="round" />
<circle cx="79.1" cy="497.8" r="12.3" fill="none" stroke="#535862" stroke-width="2.2"/>
<path d="M71.2 497.9 Q79 489.2 86.8 497.9 Q79 506.6 71.2 497.9 Z" fill="none" stroke="#535862" stroke-width="2.0" stroke-linecap="round" stroke-linejoin="round" />
<circle cx="79.1" cy="497.9" r="3.9" fill="none" stroke="#535862" stroke-width="1.8"/>
<circle cx="79.1" cy="497.9" r="0.9" fill="#535862" stroke="#535862" stroke-width="0"/>
<path d="M70.4 506.3 L66.2 502.9 L56.3 512.9 Q54.2 515.6 56.5 518.2 Q59.2 520.6 61.8 518.4 L71.7 508.3 Z M64.4 505.8 L68.4 509.8" fill="none" stroke="#535862" stroke-width="2.1" stroke-linecap="round" stroke-linejoin="round" />
<path d="M70 621 Q70.2 618.6 68.8 616.6 Q64.2 612.6 64.2 608.8 Q64.4 599.8 74.5 599.6 Q84.7 599.8 84.9 608.8 Q84.9 612.6 80.4 616.6 Q79.2 618.6 79.9 621 Z" fill="none" stroke="#535862" stroke-width="2.2" stroke-linecap="round" stroke-linejoin="round" />
<path d="M69.6 622.6 H80.0 Q82.8 622.6 82.8 625.4 V625.5 Q82.8 628.3 80.0 628.3 H69.6 Q66.8 628.3 66.8 625.5 V625.4 Q66.8 622.6 69.6 622.6 Z" fill="none" stroke="#535862" stroke-width="2.2" stroke-linecap="round" stroke-linejoin="round" />
<path d="M70.8 628.6 V630.6 Q70.8 632.4 72.6 632.4 H77.3 Q79.1 632.4 79.1 630.6 V628.6" fill="none" stroke="#535862" stroke-width="2.2" stroke-linecap="round" stroke-linejoin="round" />
<path d="M74.9 607.3 L71.3 610.9 H77.2 L74 615" fill="none" stroke="#535862" stroke-width="2.0" stroke-linecap="round" stroke-linejoin="round" />
<path d="M73.1 591.6 L73.1 594.8" fill="none" stroke="#535862" stroke-width="2.2" stroke-linecap="round" stroke-linejoin="round" />
<path d="M84.3 597.6 L85.8 595.5" fill="none" stroke="#535862" stroke-width="2.2" stroke-linecap="round" stroke-linejoin="round" />
<path d="M60.3 597.4 L62.4 599.6" fill="none" stroke="#535862" stroke-width="2.2" stroke-linecap="round" stroke-linejoin="round" />
<path d="M55.8 610.6 L59.3 610.6" fill="none" stroke="#535862" stroke-width="2.2" stroke-linecap="round" stroke-linejoin="round" />
<path d="M89 609 L92.4 609" fill="none" stroke="#535862" stroke-width="2.2" stroke-linecap="round" stroke-linejoin="round" />
<path d="M62.1 623.4 L64.1 621.1" fill="none" stroke="#535862" stroke-width="2.2" stroke-linecap="round" stroke-linejoin="round" />
<path d="M85.8 618.8 L87.5 621.2" fill="none" stroke="#535862" stroke-width="2.2" stroke-linecap="round" stroke-linejoin="round" />
<circle cx="73.85" cy="718.1" r="18.3" fill="none" stroke="#535862" stroke-width="2.2"/>
<ellipse cx="73.85" cy="718.1" rx="8.4" ry="18.3" fill="none" stroke="#535862" stroke-width="2.2"/>
<path d="M56.8 711.6 H90.9 M56.8 724.8 H90.9" fill="none" stroke="#535862" stroke-width="2.2" stroke-linecap="round" stroke-linejoin="round" />
<path d="M73.4 808.8 L55.8 820.4 Q54.2 823.4 57.4 823.4 H89.4 Q92.6 823.4 91 820.4 Z" fill="none" stroke="#fff" stroke-width="2.3" stroke-linecap="round" stroke-linejoin="round" />
<circle cx="73.4" cy="817.4" r="2.0" fill="none" stroke="#fff" stroke-width="1.6"/>
<path d="M59.7 824.7 V843.3 M65 824.7 V843.3 M81.8 824.7 V843.3 M87.1 824.7 V843.3" fill="none" stroke="#fff" stroke-width="2.2" stroke-linecap="round" stroke-linejoin="round" />
<path d="M70.7 843.3 V829.1 H76.5 V843.3" fill="none" stroke="#fff" stroke-width="2.0" stroke-linecap="round" stroke-linejoin="round" />
<path d="M55.2 844.6 H91.5" fill="none" stroke="#fff" stroke-width="2.4" stroke-linecap="round" stroke-linejoin="round" />
<path d="M59.800000000000004 917.2 H68.7 Q72.9 917.2 72.9 921.4000000000001 V942.3 Q72.9 946.5 68.7 946.5 H59.800000000000004 Q55.6 946.5 55.6 942.3 V921.4000000000001 Q55.6 917.2 59.800000000000004 917.2 Z" fill="none" stroke="#535862" stroke-width="2.2" stroke-linecap="round" stroke-linejoin="round" />
<path d="M78.8 917.2 H87.89999999999999 Q92.1 917.2 92.1 921.4000000000001 V942.3 Q92.1 946.5 87.89999999999999 946.5 H78.8 Q74.6 946.5 74.6 942.3 V921.4000000000001 Q74.6 917.2 78.8 917.2 Z" fill="none" stroke="#535862" stroke-width="2.2" stroke-linecap="round" stroke-linejoin="round" />
<path d="M73.85 920 V946.5" fill="none" stroke="#535862" stroke-width="2.2" stroke-linecap="round" stroke-linejoin="round" />
<circle cx="73.85" cy="947.3" r="2.4" fill="#535862" stroke="#535862" stroke-width="0"/>
<path d="M60.6 926.6 H68.6 M79.1 926.6 H86.4" fill="none" stroke="#535862" stroke-width="2.2" stroke-linecap="round" stroke-linejoin="round" />
<path d="M60.6 931.9 H68.6 M79.1 931.9 H86.4" fill="none" stroke="#535862" stroke-width="2.2" stroke-linecap="round" stroke-linejoin="round" />
<path d="M60.6 937.1 H68.6 M79.1 937.1 H86.4" fill="none" stroke="#535862" stroke-width="2.2" stroke-linecap="round" stroke-linejoin="round" />
<path d="M73.40 1248.80 L73.88 1248.85 L74.35 1249.01 L74.80 1249.26 L75.24 1249.60 L75.65 1250.02 L76.03 1250.50 L76.38 1251.02 L76.70 1251.57 L77.00 1252.12 L77.27 1252.66 L77.53 1253.17 L77.78 1253.63 L78.03 1254.02 L78.30 1254.33 L78.60 1254.54 L78.96 1254.60 L79.37 1254.57 L79.83 1254.48 L80.33 1254.33 L80.87 1254.15 L81.45 1253.96 L82.05 1253.78 L82.66 1253.62 L83.28 1253.50 L83.89 1253.43 L84.47 1253.43 L85.02 1253.49 L85.52 1253.64 L85.97 1253.86 L86.34 1254.16 L86.64 1254.53 L86.86 1254.98 L87.01 1255.48 L87.07 1256.03 L87.07 1256.61 L87.00 1257.22 L86.88 1257.84 L86.72 1258.45 L86.54 1259.05 L86.35 1259.63 L86.17 1260.17 L86.02 1260.67 L85.93 1261.13 L85.90 1261.54 L85.96 1261.90 L86.17 1262.20 L86.48 1262.47 L86.87 1262.72 L87.33 1262.97 L87.84 1263.23 L88.38 1263.50 L88.93 1263.80 L89.48 1264.12 L90.00 1264.47 L90.48 1264.85 L90.90 1265.26 L91.24 1265.70 L91.49 1266.15 L91.65 1266.62 L91.70 1267.10 L91.65 1267.58 L91.49 1268.05 L91.24 1268.50 L90.90 1268.94 L90.48 1269.35 L90.00 1269.73 L89.48 1270.08 L88.93 1270.40 L88.38 1270.70 L87.84 1270.97 L87.33 1271.23 L86.87 1271.48 L86.48 1271.73 L86.17 1272.00 L85.96 1272.30 L85.90 1272.66 L85.93 1273.07 L86.02 1273.53 L86.17 1274.03 L86.35 1274.57 L86.54 1275.15 L86.72 1275.75 L86.88 1276.36 L87.00 1276.98 L87.07 1277.59 L87.07 1278.17 L87.01 1278.72 L86.86 1279.22 L86.64 1279.67 L86.34 1280.04 L85.97 1280.34 L85.52 1280.56 L85.02 1280.71 L84.47 1280.77 L83.89 1280.77 L83.28 1280.70 L82.66 1280.58 L82.05 1280.42 L81.45 1280.24 L80.87 1280.05 L80.33 1279.87 L79.83 1279.72 L79.37 1279.63 L78.96 1279.60 L78.60 1279.66 L78.30 1279.87 L78.03 1280.18 L77.78 1280.57 L77.53 1281.03 L77.27 1281.54 L77.00 1282.08 L76.70 1282.63 L76.38 1283.18 L76.03 1283.70 L75.65 1284.18 L75.24 1284.60 L74.80 1284.94 L74.35 1285.19 L73.88 1285.35 L73.40 1285.40 L72.92 1285.35 L72.45 1285.19 L72.00 1284.94 L71.56 1284.60 L71.15 1284.18 L70.77 1283.70 L70.42 1283.18 L70.10 1282.63 L69.80 1282.08 L69.53 1281.54 L69.27 1281.03 L69.02 1280.57 L68.77 1280.18 L68.50 1279.87 L68.20 1279.66 L67.84 1279.60 L67.43 1279.63 L66.97 1279.72 L66.47 1279.87 L65.93 1280.05 L65.35 1280.24 L64.75 1280.42 L64.14 1280.58 L63.52 1280.70 L62.91 1280.77 L62.33 1280.77 L61.78 1280.71 L61.28 1280.56 L60.83 1280.34 L60.46 1280.04 L60.16 1279.67 L59.94 1279.22 L59.79 1278.72 L59.73 1278.17 L59.73 1277.59 L59.80 1276.98 L59.92 1276.36 L60.08 1275.75 L60.26 1275.15 L60.45 1274.57 L60.63 1274.03 L60.78 1273.53 L60.87 1273.07 L60.90 1272.66 L60.84 1272.30 L60.63 1272.00 L60.32 1271.73 L59.93 1271.48 L59.47 1271.23 L58.96 1270.97 L58.42 1270.70 L57.87 1270.40 L57.32 1270.08 L56.80 1269.73 L56.32 1269.35 L55.90 1268.94 L55.56 1268.50 L55.31 1268.05 L55.15 1267.58 L55.10 1267.10 L55.15 1266.62 L55.31 1266.15 L55.56 1265.70 L55.90 1265.26 L56.32 1264.85 L56.80 1264.47 L57.32 1264.12 L57.87 1263.80 L58.42 1263.50 L58.96 1263.23 L59.47 1262.97 L59.93 1262.72 L60.32 1262.47 L60.63 1262.20 L60.84 1261.90 L60.90 1261.54 L60.87 1261.13 L60.78 1260.67 L60.63 1260.17 L60.45 1259.63 L60.26 1259.05 L60.08 1258.45 L59.92 1257.84 L59.80 1257.22 L59.73 1256.61 L59.73 1256.03 L59.79 1255.48 L59.94 1254.98 L60.16 1254.53 L60.46 1254.16 L60.83 1253.86 L61.28 1253.64 L61.78 1253.49 L62.33 1253.43 L62.91 1253.43 L63.52 1253.50 L64.14 1253.62 L64.75 1253.78 L65.35 1253.96 L65.93 1254.15 L66.47 1254.33 L66.97 1254.48 L67.43 1254.57 L67.84 1254.60 L68.20 1254.54 L68.50 1254.33 L68.77 1254.02 L69.02 1253.63 L69.27 1253.17 L69.53 1252.66 L69.80 1252.12 L70.10 1251.57 L70.42 1251.02 L70.77 1250.50 L71.15 1250.02 L71.56 1249.60 L72.00 1249.26 L72.45 1249.01 L72.92 1248.85 L73.40 1248.80 Z" fill="none" stroke="#535862" stroke-width="2.2" stroke-linecap="round" stroke-linejoin="round" />
<circle cx="73.4" cy="1267.1" r="5.4" fill="none" stroke="#535862" stroke-width="2.2"/>
<path d="M78.7 1354.1 H64.6 Q58.2 1354.1 58.2 1360.5 V1386.7 Q58.2 1393.1 64.6 1393.1 H78.7" fill="none" stroke="#535862" stroke-width="2.2" stroke-linecap="round" stroke-linejoin="round" />
<path d="M66.6 1373.6 H88.6 M82 1366.8 L88.8 1373.6 L82 1380.6" fill="none" stroke="#535862" stroke-width="2.2" stroke-linecap="round" stroke-linejoin="round" />
<path d="M0 1407 Q0.8 1417 3.2 1424 L0 1424 Z" fill="#111"/>
<path d="M2878.4 1329 H2905 Q2913 1329 2913 1337 V1352.6 Q2913 1360.6 2905 1360.6 H2878.4 Q2870.4 1360.6 2870.4 1352.6 V1337 Q2870.4 1329 2878.4 1329 Z" fill="#fff"/>
<path d="M2870.1 1338 H2870.5 Q2873 1338 2873 1340.5 V1348.5 Q2873 1351 2870.5 1351 H2870.1 Q2867.6 1351 2867.6 1348.5 V1340.5 Q2867.6 1338 2870.1 1338 Z" fill="#fff"/>
<path d="M2912.9 1338 H2913.3 Q2915.8 1338 2915.8 1340.5 V1348.5 Q2915.8 1351 2913.3 1351 H2912.9 Q2910.4 1351 2910.4 1348.5 V1340.5 Q2910.4 1338 2912.9 1338 Z" fill="#fff"/>
<path d="M2891 1360 L2894.5 1366 L2898 1360 Z" fill="#fff"/>
<path d="M2880 1337 H2903.5 Q2907.5 1337 2907.5 1341 V1350 Q2907.5 1354 2903.5 1354 H2880 Q2876 1354 2876 1350 V1341 Q2876 1337 2880 1337 Z" fill="#cde5ff"/>
<circle cx="2883.8" cy="1345" r="2.0" fill="#0c50c6" stroke="#0c50c6" stroke-width="0"/>
<circle cx="2899" cy="1345" r="2.0" fill="#0c50c6" stroke="#0c50c6" stroke-width="0"/>
<path d="M2891.3 1323 V1329" fill="none" stroke="#fff" stroke-width="1.8" stroke-linecap="round" stroke-linejoin="round" />
<circle cx="2891.3" cy="1321" r="2.6" fill="#fff" stroke="#fff" stroke-width="0"/>
</svg>
</body></html>
